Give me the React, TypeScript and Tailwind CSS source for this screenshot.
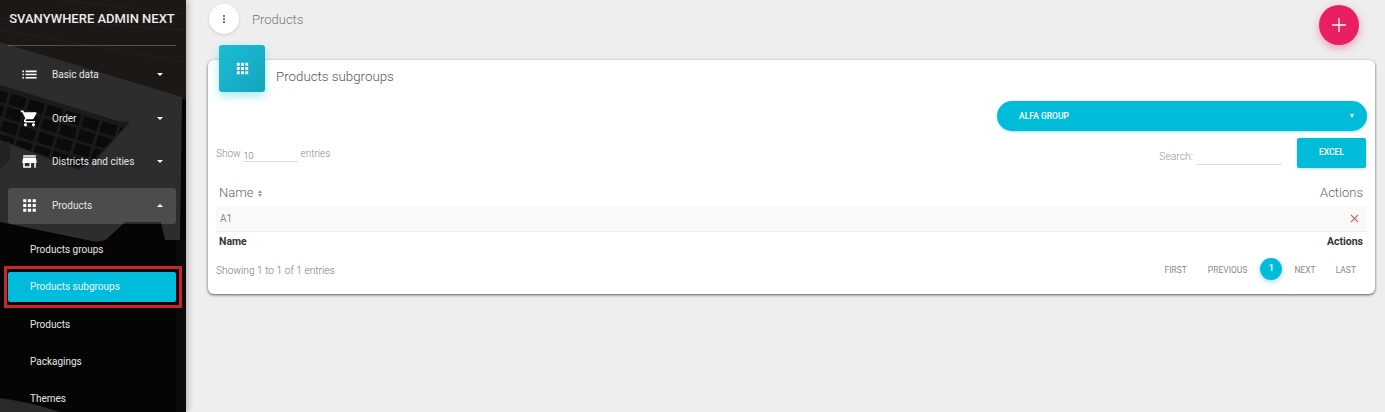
const ICONS = {
  list: "M3 13h2v-2H3v2zm0 4h2v-2H3v2zm0-8h2V7H3v2zm4 4h14v-2H7v2zm0 4h14v-2H7v2zM7 7v2h14V7H7z",
  cart: "M7 18c-1.1 0-1.99.9-1.99 2S5.9 22 7 22s2-.9 2-2-.9-2-2-2zM1 2v2h2l3.6 7.59-1.35 2.45c-.16.28-.25.61-.25.96 0 1.1.9 2 2 2h12v-2H7.42c-.14 0-.25-.11-.25-.25l.03-.12.9-1.63h7.45c.75 0 1.41-.41 1.75-1.03l3.58-6.49c.08-.14.12-.31.12-.48 0-.55-.45-1-1-1H5.21l-.94-2H1zm16 16c-1.1 0-1.99.9-1.99 2s.89 2 1.99 2 2-.9 2-2-.9-2-2-2z",
  store: "M20 4H4v2h16V4zm1 10v-2l-1-5H4l-1 5v2h1v6h10v-6h4v6h2v-6h1zm-9 4H6v-4h6v4z",
  apps: "M4 8h4V4H4v4zm6 12h4v-4h-4v4zm-6 0h4v-4H4v4zm0-6h4v-4H4v4zm6 0h4v-4h-4v4zm6-10v4h4V4h-4zm-6 4h4V4h-4v4zm6 6h4v-4h-4v4zm0 6h4v-4h-4v4z",
  more: "M12 8c1.1 0 2-.9 2-2s-.9-2-2-2-2 .9-2 2 .9 2 2 2zm0 2c-1.1 0-2 .9-2 2s.9 2 2 2 2-.9 2-2-.9-2-2-2zm0 6c-1.1 0-2 .9-2 2s.9 2 2 2 2-.9 2-2-.9-2-2-2z",
};

function Icon({ d, className }: { d: string; className?: string }) {
  return (
    <svg viewBox="0 0 24 24" fill="currentColor" className={className}>
      <path d={d} />
    </svg>
  );
}

function Caret({ up }: { up?: boolean }) {
  return (
    <span
      className={
        up
          ? "ml-auto mr-[13px] size-0 border-x-[3.5px] border-b-[3.5px] border-x-transparent border-b-white"
          : "ml-auto mr-[13px] size-0 border-x-[3.5px] border-t-[3.5px] border-x-transparent border-t-white"
      }
    />
  );
}

// the darkened laptop photo behind the sidebar
function SidebarPhoto() {
  const keys = [];
  for (let row = 0; row < 4; row++) {
    for (let col = 0; col < 8; col++) {
      keys.push(
        <rect
          key={`${row}-${col}`}
          x={col * 19 - 6}
          y={row * 14 + 90}
          width={16}
          height={11}
          rx={1}
          fill="#0b0b0b"
        />
      );
    }
  }
  return (
    <svg viewBox="0 0 186 412" className="absolute inset-0 h-full w-full">
      <rect width="186" height="412" fill="#050505" />
      <polygon points="0,0 186,0 186,100 0,42" fill="#1b1816" />
      <path d="M0 18 L186 30 M0 30 L186 62 M60 0 L186 14" stroke="#221e19" strokeWidth="1.5" />
      <path
        d="M0 42 L182 97 L180 240 L165 240 L161 222 L125 222 L108 238 Q102 243 92 241 L0 222 Z"
        fill="#2d2d2e"
      />
      <polygon points="0,85 118,121 130,122 96,160 78,170 0,140" fill="#1a1a1a" />
      <clipPath id="kbd">
        <polygon points="0,87 118,123 128,123 95,158 78,167 0,140" />
      </clipPath>
      <g clipPath="url(#kbd)">
        <g transform="rotate(17 0 87)">{keys}</g>
      </g>
      <polygon points="0,142 10,142 10,160 0,170" fill="#222" />
      <path d="M0 398 Q30 402 60 412 L0 412 Z" fill="#2a2a2a" />
      <rect x="176" y="240" width="10" height="172" fill="#0a0a0a" />
    </svg>
  );
}

function NavItem({
  icon,
  label,
  open,
}: {
  icon: string;
  label: string;
  open?: boolean;
}) {
  return (
    <div
      className={
        open
          ? "flex h-[36px] items-center rounded-[3px] bg-white/15 mb-[8px]"
          : "flex h-[36px] items-center rounded-[3px] mb-[7.7px]"
      }
    >
      <Icon d={icon} className="ml-[12px] size-[19px] shrink-0 text-white" />
      <span className="ml-[13px] text-[10px] text-[#e6e6e6]">{label}</span>
      <Caret up={open} />
    </div>
  );
}

function SubItem({ label, active }: { label: string; active?: boolean }) {
  if (active) {
    // red frame round the selected entry
    return (
      <div className="-my-[6px] -mr-[6px] -ml-[4px] border-[3px] border-[#c9252b] py-[3px] pr-[3px] pl-[1px]">
        <div className="flex h-[30px] items-center rounded-[2px] bg-[#00bcdc] pl-[22px] text-[10px] text-[#e4f8fb]">
          {label}
        </div>
      </div>
    );
  }
  return (
    <div className="flex h-[30px] items-center pl-[22px] text-[10px] text-[#e6e6e6]">
      {label}
    </div>
  );
}

function Sidebar() {
  return (
    <aside className="relative z-10 h-[412px] w-[186px] shrink-0 overflow-hidden shadow-[2px_0_6px_rgba(0,0,0,0.25)]">
      <SidebarPhoto />
      <div className="relative pr-[10px] pl-[8px]">
        <div className="flex h-[46px] items-center justify-center border-b border-white/25 pb-[7px] text-[13px] font-medium whitespace-nowrap text-[#ececec]">
          SVANYWHERE ADMIN NEXT
        </div>
        <nav className="pt-[10.5px]">
          <NavItem icon={ICONS.list} label="Basic data" />
          <NavItem icon={ICONS.cart} label="Order" />
          <NavItem icon={ICONS.store} label="Districts and cities" />
          <NavItem icon={ICONS.apps} label="Products" open />
          <div className="flex flex-col gap-[7.3px] pt-[2.9px]">
            <SubItem label="Products groups" />
            <SubItem label="Products subgroups" active />
            <SubItem label="Products" />
            <SubItem label="Packagings" />
            <SubItem label="Themes" />
          </div>
        </nav>
      </div>
    </aside>
  );
}

function TopBar() {
  return (
    <div className="flex h-[45px] items-start pr-[26px] pl-[23px]">
      <div className="mt-[4px] flex size-[30px] items-center justify-center rounded-full bg-white shadow-[0_1px_3px_rgba(0,0,0,0.15)]">
        <Icon d={ICONS.more} className="size-[12px] text-[#555]" />
      </div>
      <span className="mt-[12px] ml-[13px] text-[13px] leading-[16px] font-light text-[#777]">
        Products
      </span>
      <button className="mt-[5px] ml-auto flex size-[40px] items-center justify-center rounded-full bg-[#e91e63] shadow-[0_3px_8px_rgba(233,30,99,0.4)]">
        <svg viewBox="0 0 16 16" className="size-[16px]" stroke="white" strokeWidth="1.3">
          <path d="M8 1 V15 M1 8 H15" />
        </svg>
      </button>
    </div>
  );
}

function PageLink({ label, className }: { label: string; className: string }) {
  return <span className={`pt-[2px] text-[8.5px] text-[#888] ${className}`}>{label}</span>;
}

function Card() {
  return (
    <section className="mt-[15px] ml-[22px] mr-[10px] h-[234px] rounded-[6px] bg-white px-[8px] shadow-[0_1px_3px_rgba(0,0,0,0.65)]">
      <div className="flex h-[41px] items-start">
        <div className="-mt-[15px] ml-[3px] flex h-[47px] w-[46px] items-center justify-center rounded-[3px] bg-gradient-to-br from-[#1cbcd6] to-[#12a5bd] shadow-[0_4px_10px_rgba(0,188,212,0.35)]">
          <Icon d={ICONS.apps} className="size-[17px] text-white" />
        </div>
        <h2 className="mt-[8px] ml-[11px] text-[13.3px] leading-[17px] font-light text-[#555]">
          Products subgroups
        </h2>
      </div>
      <div className="flex justify-end">
        <div className="flex h-[30px] w-[370px] items-center rounded-full bg-[#00bcd9] pr-[13px] pl-[22px] text-[8.5px] font-medium text-white shadow-[0_1px_2px_rgba(0,188,212,0.4)]">
          ALFA GROUP
          <span className="ml-auto size-0 border-x-[2.5px] border-t-[4px] border-x-transparent border-t-white" />
        </div>
      </div>
      <div className="mt-[7px] flex h-[30px] items-start">
        <div className="mt-[10px] flex items-start text-[10px] leading-[12px] font-light text-[#888]">
          <span>Show</span>
          <span className="ml-[2px] h-[14px] w-[55px] border-b border-[#ddd] pt-[3px] pl-[1px] text-[9px] leading-[10px] text-[#666]">10</span>
          <span className="ml-[3px]">entries</span>
        </div>
        <div className="mt-[13px] ml-auto flex items-start text-[10.4px] leading-[12px] font-light text-[#999]">
          <span>Search:</span>
          <span className="ml-[4px] h-[14px] w-[85px] border-b border-[#ddd]" />
        </div>
        <button className="mr-[1px] ml-[15px] flex h-[30px] w-[69px] justify-center rounded-[2px] bg-[#00bcd9] pt-[8px] text-[8.5px] leading-[12px] font-medium text-white shadow-[0_1px_3px_rgba(0,188,212,0.3)]">
          EXCEL
        </button>
      </div>
      <table className="mt-[10px] w-full border-collapse">
        <thead>
          <tr className="h-[28px]">
            <th className="pt-[2px] pl-[3px] text-left text-[13px] font-light text-[#666]">
              <span className="inline-flex items-center gap-[5px]">
                Name
                <span className="flex flex-col gap-[1px]">
                  <span className="size-0 border-x-[2.5px] border-b-[3px] border-x-transparent border-b-[#999]" />
                  <span className="size-0 border-x-[2.5px] border-t-[3px] border-x-transparent border-t-[#999]" />
                </span>
              </span>
            </th>
            <th className="pt-[2px] pr-[4px] text-right text-[13px] font-light text-[#666]">Actions</th>
          </tr>
        </thead>
        <tbody>
          <tr className="h-[25px] border-b border-[#eee] bg-[#f9f9f9]">
            <td className="pl-[4px] text-[10px] text-[#888]">A1</td>
            <td className="pr-[8px] text-right">
              <svg viewBox="0 0 10 10" className="ml-auto size-[9px]" stroke="#d9534f" strokeWidth="1.2">
                <path d="M1 1 L9 9 M9 1 L1 9" />
              </svg>
            </td>
          </tr>
        </tbody>
        <tfoot>
          <tr className="h-[21px]">
            <td className="pl-[3px] text-[10.5px] font-bold text-[#333]">Name</td>
            <td className="pr-[4px] text-right text-[10.5px] font-bold text-[#333]">Actions</td>
          </tr>
        </tfoot>
      </table>
      <div className="mt-[6px] flex items-center">
        <span className="pt-[4px] text-[10.2px] font-light text-[#777]">Showing 1 to 1 of 1 entries</span>
        <div className="ml-auto flex items-center pr-[11px]">
          <PageLink label="FIRST" className="" />
          <PageLink label="PREVIOUS" className="ml-[21px]" />
          <span className="ml-[13px] flex size-[22px] items-center justify-center rounded-full bg-[#00bcd9] text-[9px] font-medium text-white shadow-[0_2px_5px_rgba(0,150,255,0.35)]">
            1
          </span>
          <PageLink label="NEXT" className="ml-[12px]" />
          <PageLink label="LAST" className="ml-[20px]" />
        </div>
      </div>
    </section>
  );
}

export default function App() {
  return (
    <div className="flex h-[412px] w-[1385px] overflow-hidden bg-[#eeeeee] font-['Roboto',sans-serif]">
      <Sidebar />
      <main className="min-w-0 flex-1">
        <TopBar />
        <Card />
      </main>
    </div>
  );
}
